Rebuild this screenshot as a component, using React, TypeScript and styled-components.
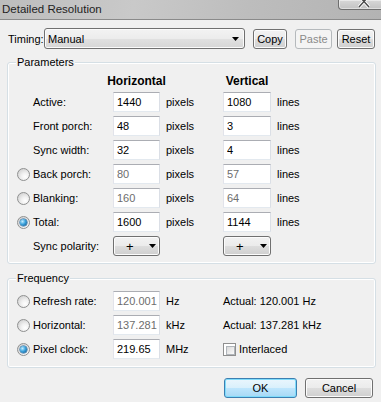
import { Fragment } from "react";
import { createGlobalStyle, styled } from "styled-components";

const GlobalStyle = createGlobalStyle`
  html, body {
    margin: 0;
    padding: 0;
    background: #f0f0f0;
  }
  body {
    font-family: "Liberation Sans", Arial, sans-serif;
    font-size: 11px;
    color: #000;
  }
  * { box-sizing: border-box; }
`;

const Dialog = styled.div`
  width: 381px;
  height: 402px;
  overflow: hidden;
  background: #f0f0f0;
  display: flex;
  flex-direction: column;
`;

const TitleBar = styled.div`
  height: 20px;
  flex: none;
  border-bottom: 1px solid #8a8a8a;
  background: linear-gradient(100deg, #bdbdbd 0%, #c9c9c9 35%, #bdbdbd 65%, #b3b3b3 100%);
  display: flex;
  align-items: flex-start;
  justify-content: space-between;
`;

const Title = styled.div`
  padding-left: 2px;
  line-height: 18px;
  font-size: 11.5px;
  color: #1e1e1e;
`;

const CloseBox = styled.div`
  width: 51px;
  height: 10px;
  margin-right: -8px;
  border: 1px solid #6e6e6e;
  border-top: none;
  border-radius: 0 0 4px 4px;
  background: linear-gradient(#d8d8d8, #c2c2c2);
  box-shadow: inset 0 0 0 1px rgba(255, 255, 255, 0.45);
  overflow: hidden;
  display: flex;
  justify-content: center;
  align-items: flex-end;
  padding-left: 1px;
`;

const Body = styled.div`
  padding: 8px 5px 0 7px;
  display: flex;
  flex-direction: column;
`;

const TimingRow = styled.div`
  display: flex;
  align-items: center;
  height: 21px;
`;

const RowLabel = styled.span`
  width: 37px;
  padding-left: 1px;
`;

const Combo = styled.div`
  width: 201px;
  height: 21px;
  border: 1px solid #707070;
  border-radius: 3px;
  background: linear-gradient(#f3f3f3 0%, #ececec 50%, #e1e1e1 51%, #d6d6d6 100%);
  box-shadow: inset 0 0 0 1px #fbfbfb;
  display: flex;
  align-items: center;
  justify-content: space-between;
  padding: 0 5px 0 3px;
`;

const Button = styled.button<{ $w: number; $gap?: number; $h?: number; $default?: boolean }>`
  width: ${(p) => p.$w}px;
  height: ${(p) => p.$h ?? 20}px;
  margin: 0 0 0 ${(p) => p.$gap ?? 0}px;
  padding: 0;
  font: inherit;
  color: #000;
  border: 1px solid ${(p) => (p.$default ? "#3c7fb1" : "#707070")};
  border-radius: 3px;
  background: ${(p) =>
    p.$default
      ? "linear-gradient(#eaf6fd 0%, #d9f0fc 50%, #bee6fd 51%, #a7d9f5 100%)"
      : "linear-gradient(#f2f2f2 0%, #ebebeb 50%, #dddddd 51%, #cfcfcf 100%)"};
  box-shadow: inset 0 0 0 1px ${(p) => (p.$default ? "#7fdcfb" : "#fcfcfc")};

  &:disabled {
    border-color: #b5b9bc;
    background: #f4f4f4;
    color: #8a8a8a;
    box-shadow: none;
  }
`;

const DropButton = styled(Button)`
  display: flex;
  align-items: center;
  justify-content: space-between;
  padding: 0 3px 0 12px;
  font-size: 13px;
`;

const Group = styled.div<{ $top: number }>`
  position: relative;
  margin-top: ${(p) => p.$top}px;
  border: 1px solid #d5dfe5;
  border-radius: 3px;
  box-shadow: inset 0 0 0 1px #ffffff;
`;

const Legend = styled.span`
  position: absolute;
  top: -8px;
  left: 8px;
  padding: 0 1px;
  line-height: 15px;
  background: #f0f0f0;
`;

const Grid = styled.div<{ $cols: string; $pad: string; $head?: boolean }>`
  display: grid;
  grid-template-columns: ${(p) => p.$cols};
  grid-template-rows: ${(p) => (p.$head ? "15px" : "20px")};
  grid-auto-rows: 20px;
  row-gap: 4px;
  align-items: center;
  padding: ${(p) => p.$pad};
`;

const Heading = styled.span<{ $col: number }>`
  grid-column: ${(p) => p.$col};
  justify-self: center;
  white-space: nowrap;
  font-weight: bold;
  font-size: 12px;
`;

const Label = styled.span<{ $col?: number }>`
  grid-column: ${(p) => p.$col ?? 2};
  white-space: nowrap;
`;

const Unit = styled.span`
  padding-left: 6px;
  white-space: nowrap;
`;

const Field = styled.input<{ $dim?: boolean }>`
  width: 100%;
  height: 20px;
  margin: 0;
  border: 1px solid;
  border-color: #abadb3 #dbdfe6 #e3e9ef #e2e3ea;
  background: #fff;
  padding: 0 0 0 3px;
  font: inherit;
  color: ${(p) => (p.$dim ? "#6d6d6d" : "#000")};
  outline: none;
`;

const Radio = styled.span<{ $on?: boolean }>`
  grid-column: 1;
  width: 13px;
  height: 13px;
  border-radius: 50%;
  border: 1px solid #8f9090;
  background: radial-gradient(circle at 65% 70%, #ffffff 0%, #f1f1f1 35%, #cdcdcd 90%);
  display: flex;
  align-items: center;
  justify-content: center;

  &::after {
    content: "";
    display: ${(p) => (p.$on ? "block" : "none")};
    width: 7px;
    height: 7px;
    border-radius: 50%;
    background: radial-gradient(circle at 35% 35%, #c4ecff 0%, #3aa2dc 45%, #0d4a80 100%);
    box-shadow: 0 0 0 0.5px #1c5d92;
  }
`;

const CheckRow = styled.span`
  display: flex;
  align-items: center;
  gap: 3px;
`;

const CheckBox = styled.span`
  width: 13px;
  height: 13px;
  border: 1px solid #8f8f8f;
  background: #fff;
  padding: 2px;

  &::after {
    content: "";
    display: block;
    width: 100%;
    height: 100%;
    border: 1px solid #b0b5ba;
    background: linear-gradient(135deg, #d9d9d9, #fbfbfb);
  }
`;

const Footer = styled.div`
  margin-top: 10px;
  margin-right: 3px;
  display: flex;
  justify-content: flex-end;
  gap: 8px;
`;

const Arrow = () => (
  <svg width="7" height="4" viewBox="0 0 7 4">
    <polygon points="0,0 7,0 3.5,4" fill="#000" />
  </svg>
);

const params = [
  { radio: undefined, label: "Active:", h: "1440", v: "1080", dim: false },
  { radio: undefined, label: "Front porch:", h: "48", v: "3", dim: false },
  { radio: undefined, label: "Sync width:", h: "32", v: "4", dim: false },
  { radio: false, label: "Back porch:", h: "80", v: "57", dim: true },
  { radio: false, label: "Blanking:", h: "160", v: "64", dim: true },
  { radio: true, label: "Total:", h: "1600", v: "1144", dim: false },
];

const freqs = [
  { on: false, label: "Refresh rate:", value: "120.001", unit: "Hz", actual: "Actual: 120.001 Hz" },
  { on: false, label: "Horizontal:", value: "137.281", unit: "kHz", actual: "Actual: 137.281 kHz" },
  { on: true, label: "Pixel clock:", value: "219.65", unit: "MHz", actual: null },
];

export default function App() {
  return (
    <Dialog>
      <GlobalStyle />
      <TitleBar>
        <Title>Detailed Resolution</Title>
        <CloseBox>
          <svg width="12" height="10" viewBox="0 0 12 10" style={{ marginBottom: 1 }}>
            <path d="M1 -2 L11 9 M11 -2 L1 9" stroke="#ffffff" strokeWidth="3.2" />
            <path d="M1 -2 L11 9 M11 -2 L1 9" stroke="#4a4a4a" strokeWidth="1.4" />
          </svg>
        </CloseBox>
      </TitleBar>
      <Body>
        <TimingRow>
          <RowLabel>Timing:</RowLabel>
          <Combo>
            <span>Manual</span>
            <Arrow />
          </Combo>
          <Button $w={34} $gap={8}>Copy</Button>
          <Button $w={37} $gap={8} disabled>Paste</Button>
          <Button $w={38} $gap={5}>Reset</Button>
        </TimingRow>

        <Group $top={13}>
          <Legend>Parameters</Legend>
          <Grid $cols="16px 80px 47px 63px 48px 1fr" $pad="10px 0 7px 9px" $head>
            <Heading $col={3}>Horizontal</Heading>
            <Heading $col={5}>Vertical</Heading>
            {params.map((r) => (
              <Fragment key={r.label}>
                {r.radio !== undefined && <Radio $on={r.radio} />}
                <Label>{r.label}</Label>
                <Field readOnly defaultValue={r.h} $dim={r.dim} />
                <Unit>pixels</Unit>
                <Field readOnly defaultValue={r.v} $dim={r.dim} />
                <Unit>lines</Unit>
              </Fragment>
            ))}
            <Label>Sync polarity:</Label>
            <DropButton $w={47}>
              <span>+</span>
              <Arrow />
            </DropButton>
            <span />
            <DropButton $w={48}>
              <span>+</span>
              <Arrow />
            </DropButton>
          </Grid>
        </Group>

        <Group $top={14}>
          <Legend>Frequency</Legend>
          <Grid $cols="16px 80px 47px 63px 1fr" $pad="12px 0 8px 9px">
            {freqs.map((f) => (
              <Fragment key={f.label}>
                <Radio $on={f.on} />
                <Label>{f.label}</Label>
                <Field readOnly defaultValue={f.value} $dim={!f.on} />
                <Unit>{f.unit}</Unit>
                {f.actual ? (
                  <span>{f.actual}</span>
                ) : (
                  <CheckRow>
                    <CheckBox />
                    Interlaced
                  </CheckRow>
                )}
              </Fragment>
            ))}
          </Grid>
        </Group>

        <Footer>
          <Button $w={73} $default>OK</Button>
          <Button $w={68}>Cancel</Button>
        </Footer>
      </Body>
    </Dialog>
  );
}
